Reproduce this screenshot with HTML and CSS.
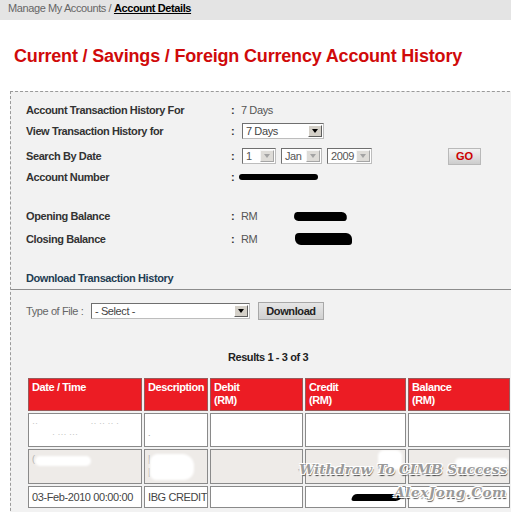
FILE: index.html
```html
<!DOCTYPE html>
<html>
<head>
<meta charset="utf-8">
<link rel="stylesheet" href="styles.css">
</head>
<body>
<div class="crumb"><span class="crumb-path">Manage My Accounts / </span><span class="crumb-current">Account Details</span></div>
<h1 class="title">Current / Savings / Foreign Currency Account History</h1>
<div class="panel">
  <div class="info">
    <div class="row r1"><span class="lbl">Account Transaction History For</span><span class="colon">:</span><span class="val">7 Days</span></div>
    <div class="row r2"><span class="lbl">View Transaction History for</span><span class="colon">:</span>
      <span class="val"><span class="sel w-days"><span class="sel-text">7 Days</span><span class="sel-arrow"></span></span></span></div>
    <div class="row r3"><span class="lbl">Search By Date</span><span class="colon">:</span>
      <span class="val dates">
        <span class="sel dis w-day"><span class="sel-text">1</span><span class="sel-arrow"></span></span>
        <span class="sel dis w-mon"><span class="sel-text">Jan</span><span class="sel-arrow"></span></span>
        <span class="sel dis w-year"><span class="sel-text">2009</span><span class="sel-arrow"></span></span>
        <span class="btn-go">GO</span>
      </span></div>
    <div class="row r4"><span class="lbl">Account Number</span><span class="colon">:</span><span class="val"><span class="redact acct"></span></span></div>
    <div class="row r5"><span class="lbl">Opening Balance</span><span class="colon">:</span><span class="val">RM <span class="redact bal-open"></span></span></div>
    <div class="row r6"><span class="lbl">Closing Balance</span><span class="colon">:</span><span class="val">RM <span class="redact bal-close"></span></span></div>
  </div>
  <h2 class="dl-title">Download Transaction History</h2>
  <div class="dl-row">
    <span class="dl-lbl">Type of File :</span>
    <span class="sel w-file"><span class="sel-text">- Select -</span><span class="sel-arrow"></span></span>
    <span class="btn-dl">Download</span>
  </div>
  <div class="results">Results 1 - 3 of 3</div>
  <table class="tx">
    <thead>
      <tr>
        <th class="c-date">Date / Time</th>
        <th class="c-desc">Description</th>
        <th class="c-debit">Debit<br>(RM)</th>
        <th class="c-credit">Credit<br>(RM)</th>
        <th class="c-bal">Balance<br>(RM)</th>
      </tr>
    </thead>
    <tbody>
      <tr class="tr1">
        <td><span class="faint">·· &nbsp;&nbsp;&nbsp;&nbsp;&nbsp;&nbsp;&nbsp;&nbsp;&nbsp;&nbsp;&nbsp;&nbsp;&nbsp;&nbsp;&nbsp;&nbsp;&nbsp;&nbsp;&nbsp; ·· ·· ·· ·</span><span class="faint f2">· ··· ···</span></td>
        <td><span class="faint dot">.</span></td>
        <td></td>
        <td></td>
        <td></td>
      </tr>
      <tr class="tr2">
        <td><span class="faint">(</span><span class="blob b-date"></span></td>
        <td><span class="faint">|<br>|</span><span class="blob b-desc"></span></td>
        <td class="t-right"><span class="faint">,</span></td>
        <td><span class="blob b-credit"></span></td>
        <td><span class="blob b-bal"></span></td>
      </tr>
      <tr class="tr3">
        <td>03-Feb-2010 00:00:00</td>
        <td>IBG CREDIT</td>
        <td></td>
        <td><span class="redact scrib"></span></td>
        <td></td>
      </tr>
    </tbody>
  </table>
  <div class="watermark">
    <div class="wm1">Withdraw To CIMB Success</div>
    <div class="wm2">AlexJong.Com</div>
  </div>
</div>
</body>
</html>
```

FILE: styles.css
```css
* { box-sizing: border-box; }
html, body { margin: 0; padding: 0; overflow: hidden; background: #fff; }
body {
  width: 511px;
  height: 512px;
  font-family: "Liberation Sans", Arial, sans-serif;
  font-size: 11px;
  letter-spacing: -0.4px;
  color: #333;
}

.crumb {
  height: 20px;
  background: #e4e4e4;
  padding: 2px 0 0 8px;
  line-height: 13px;
  color: #666;
  white-space: nowrap;
}
.crumb-current { color: #000; font-weight: bold; text-decoration: underline; }

.title {
  margin: 25px 0 0 14px;
  font-family: "Liberation Sans", Arial, sans-serif;
  font-size: 18px;
  letter-spacing: -0.18px;
  line-height: 22px;
  font-weight: bold;
  color: #d00a0a;
  white-space: nowrap;
}

.panel {
  position: relative;
  margin: 24px 0 0 10px;
  width: 520px;
  height: 440px;
  border-top: 1px dashed #9a9a9a;
  border-left: 1px dashed #9a9a9a;
  background: #f2f2f2;
}

.info { padding: 8px 0 0 15px; }
.row {
  display: grid;
  grid-template-columns: 205px 10px 1fr;
  align-items: center;
  height: 20px;
  white-space: nowrap;
}
.r2 { margin-top: 1px; }
.r3 { margin-top: 4px; height: 22px; }
.r5 { margin-top: 19px; }
.r6 { margin-top: 3px; }
.lbl { font-weight: bold; color: #333; }
.colon { font-weight: bold; color: #333; }
.val { color: #555; display: flex; align-items: center; }
.r2 .val, .r3 .val { padding-left: 1px; }

.sel {
  display: inline-flex;
  align-items: center;
  justify-content: space-between;
  height: 16px;
  background: #fff;
  border: 1px solid;
  border-color: #6f6f6f #bdbdbd #bdbdbd #6f6f6f;
  padding: 0 1px 0 3px;
  color: #444;
  line-height: 14px;
  white-space: nowrap;
}
.sel-arrow {
  width: 14px;
  height: 12px;
  flex: none;
  background: #d4d0c8;
  border: 1px solid;
  border-color: #fff #5e5e5e #5e5e5e #fff;
  display: flex;
  align-items: center;
  justify-content: center;
}
.sel-arrow::after {
  content: "";
  border-left: 3.5px solid transparent;
  border-right: 3.5px solid transparent;
  border-top: 4px solid #000;
}
.sel.dis .sel-arrow { background: #dedcd8; border-color: #f6f6f6 #a5a5a5 #a5a5a5 #f6f6f6; }
.sel.dis .sel-arrow::after { border-top-color: #a3a3a3; }
.sel.dis .sel-text { color: #555; }
.w-days { width: 82px; }
.w-day { width: 34px; }
.w-mon { width: 41px; margin-left: 5px; }
.w-year { width: 45px; margin-left: 5px; }
.w-file { width: 159px; }

.btn-go {
  margin-left: 76px;
  width: 33px;
  height: 17px;
  display: inline-flex;
  align-items: center;
  justify-content: center;
  background: linear-gradient(#f2f2f2, #cdcdcd);
  border: 1px solid #b9b9b9;
  color: #cc0000;
  font-weight: bold;
  font-size: 11px;
  letter-spacing: 0;
}

.redact { display: inline-block; background: #000; }
.acct { width: 79px; height: 6px; border-radius: 4px; margin-left: -2px; }
.bal-open { width: 53px; height: 9px; margin-left: 37px; border-radius: 3px 6px 2px 5px; transform: skewX(-8deg); }
.bal-close { width: 57px; height: 12px; margin-left: 38px; border-radius: 4px 6px 3px 6px; }

.dl-title {
  margin: 21px 0 0 0;
  padding: 0 0 3px 15px;
  font-size: 11px;
  line-height: 16px;
  font-weight: bold;
  color: #1f3d52;
  border-bottom: 1px solid #8c8c8c;
}
.dl-row {
  margin-top: 12px;
  padding-left: 15px;
  display: flex;
  align-items: center;
  height: 18px;
  color: #666;
  white-space: nowrap;
}
.dl-lbl { width: 65px; }
.btn-dl {
  margin-left: 8px;
  width: 66px;
  height: 18px;
  display: inline-flex;
  align-items: center;
  justify-content: center;
  background: linear-gradient(#e6e6e6, #d0d0d0);
  border: 1px solid #a8a8a8;
  color: #222;
  font-weight: bold;
}

.results {
  margin: 30px 0 0 17px;
  width: 480px;
  text-align: center;
  font-weight: bold;
  color: #222;
  line-height: 14px;
}

.tx {
  margin: 12px 0 0 15px;
  width: 486px;
  table-layout: fixed;
  border-collapse: separate;
  border-spacing: 2px;
}
.tx th, .tx td {
  border: 1px solid #8a8a8a;
  padding: 2px 2px 2px 3px;
  text-align: left;
  vertical-align: top;
  line-height: 13px;
  font-size: 11px;
  position: relative;
  white-space: nowrap;
  overflow: hidden;
}
.tx th {
  background: #ec1c24;
  color: #fff;
  font-weight: bold;
  height: 33px;
  border-color: #9a5a5a;
}
.c-date { width: 114px; }
.c-desc { width: 64px; }
.c-debit { width: 93px; }
.c-credit { width: 101px; }
.c-bal { width: 102px; }
.tx td { background: #fff; color: #444; }
.tr1 td { height: 34px; }
.tr2 td { height: 35px; background: #eeebe8; }
.tr3 td { height: 22px; vertical-align: middle; }
.t-right { text-align: right !important; vertical-align: middle !important; }

.faint { color: #c4c4c4; font-size: 9px; line-height: 10px; letter-spacing: 0; }
.f2 { display: block; padding-left: 20px; }
.dot { display: block; margin-top: 12px; color: #999; }
.tr2 .faint { color: #b0b0b0; }

.blob { position: absolute; background: #fff; border-radius: 6px; filter: blur(1px); }
.b-date { left: 6px; top: 6px; width: 56px; height: 10px; }
.b-desc { left: 5px; top: 4px; width: 44px; height: 26px; border-radius: 8px 12px 10px 6px; }
.b-credit { left: 72px; top: 0px; width: 24px; height: 20px; }
.b-bal { left: 46px; top: 8px; width: 54px; height: 9px; }

.scrib { width: 50px; height: 7px; margin-left: 43px; margin-top: 3px; border-radius: 4px 2px 5px 3px; transform: skewX(-20deg); }

.watermark {
  position: absolute;
  left: 256px;
  top: 367px;
  width: 240px;
  text-align: right;
  white-space: nowrap;
  font-family: "DejaVu Serif", serif;
  font-style: italic;
  font-weight: bold;
  letter-spacing: 0;
  color: #9a9a9a;
  text-shadow: -1px -1px 0 #fff, 1px -1px 0 #fff, -1px 1px 0 #fff, 1px 1px 0 #fff, 1px 2px 1px #444;
  pointer-events: none;
}
.wm1 { font-size: 13.5px; line-height: 20px; }
.wm2 { font-size: 13.5px; line-height: 20px; letter-spacing: 0.6px; margin-top: 3px; }
```
